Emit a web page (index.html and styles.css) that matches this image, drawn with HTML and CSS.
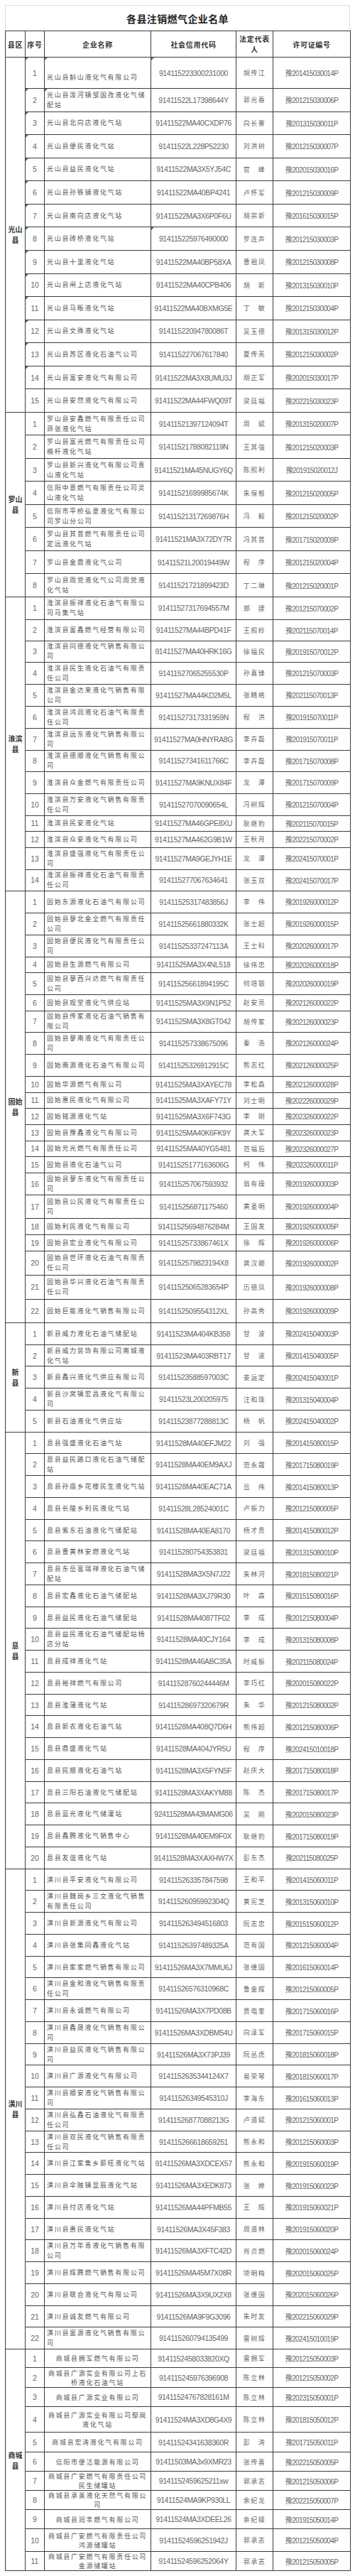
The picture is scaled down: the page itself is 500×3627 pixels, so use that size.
FILE: index.html
```html
<!DOCTYPE html>
<html lang="zh">
<head>
<meta charset="utf-8">
<title>各县注销燃气企业名单</title>
<link rel="stylesheet" href="styles.css">
</head>
<body>
<div class="sheet">
  <div class="title">各县注销燃气企业名单</div>
  <table class="list">
    <colgroup>
      <col class="c-county"><col class="c-seq"><col class="c-name"><col class="c-code"><col class="c-rep"><col class="c-lic">
    </colgroup>
    <thead>
      <tr class="head">
        <th>县区</th><th>序号</th><th>企业名称</th><th>社会信用代码</th><th>法定代表人</th><th>许可证编号</th>
      </tr>
    </thead>
    <tbody>
      <!-- 光山县 -->
      <tr class="h44"><td class="county" rowspan="15">光山<br>县</td><td class="seq g">1</td><td class="name g low">光山县斛山液化气有限公司</td><td class="code g">914115223300231000</td><td class="rep">胡传江</td><td class="lic">豫201415030014P</td></tr>
      <tr class="h326"><td class="seq g">2</td><td class="name g">光山县泼河镇邹国孜液化气储配站</td><td class="code">91411522L17398644Y</td><td class="rep">郭光春</td><td class="lic">豫201215030006P</td></tr>
      <tr class="h326"><td class="seq g">3</td><td class="name">光山县北向店液化气站</td><td class="code">91411522MA40CXDP76</td><td class="rep">向长寨</td><td class="lic">豫201315030011P</td></tr>
      <tr class="h326"><td class="seq g">4</td><td class="name">光山县便民液化气站</td><td class="code">91411522L228P52230</td><td class="rep">刘洪树</td><td class="lic">豫201215030007P</td></tr>
      <tr class="h326"><td class="seq g">5</td><td class="name">光山县益民液化气站</td><td class="code">91411522MA3X5YJ54C</td><td class="rep">官　峰</td><td class="lic">豫202015030016P</td></tr>
      <tr class="h326"><td class="seq g">6</td><td class="name">光山县孙铁铺液化气站</td><td class="code">91411522MA40BP4241</td><td class="rep">卢怀军</td><td class="lic">豫201215030009P</td></tr>
      <tr class="h326"><td class="seq g">7</td><td class="name">光山县南向店液化气站</td><td class="code">91411522MA3X6P0F6U</td><td class="rep">胡宗新</td><td class="lic">豫201615030015P</td></tr>
      <tr class="h326"><td class="seq g">8</td><td class="name">光山县砖桥液化气站</td><td class="code g">914115225976490000</td><td class="rep">罗连声</td><td class="lic">豫201215030003P</td></tr>
      <tr class="h326"><td class="seq g">9</td><td class="name">光山县十里液化气站</td><td class="code">91411522MA40BP58XA</td><td class="rep">曹祖凤</td><td class="lic">豫201215030008P</td></tr>
      <tr class="h326"><td class="seq g">10</td><td class="name">光山县闸上店液化气站</td><td class="code">91411522MA40CPB406</td><td class="rep">胡　新</td><td class="lic">豫201315030010P</td></tr>
      <tr class="h326"><td class="seq g">11</td><td class="name">光山县马畈液化气站</td><td class="code">91411522MA40BXMG5E</td><td class="rep">丁　敏</td><td class="lic">豫201215030004P</td></tr>
      <tr class="h326"><td class="seq g">12</td><td class="name">光山县文殊液化气站</td><td class="code">91411522094780086T</td><td class="rep">吴玉德</td><td class="lic">豫201315030012P</td></tr>
      <tr class="h326"><td class="seq g">13</td><td class="name">光山县苏区液化石油气公司</td><td class="code">914115227067617840</td><td class="rep">夏传英</td><td class="lic">豫201215030002P</td></tr>
      <tr class="h326"><td class="seq g">14</td><td class="name">光山县富安液化气有限公司</td><td class="code">91411522MA3X8UMU3J</td><td class="rep">胡正军</td><td class="lic">豫202015030017P</td></tr>
      <tr class="h326"><td class="seq">15</td><td class="name">光山县安然液化气有限公司</td><td class="code">91411522MA44FWQ09T</td><td class="rep">梁廷福</td><td class="lic">豫202215030023P</td></tr>

      <!-- 罗山县 -->
      <tr class="h325"><td class="county" rowspan="8">罗山<br>县</td><td class="seq">1</td><td class="name">罗山县安鑫燃气有限责任公司莽张液化气站</td><td class="code">91411521397124094T</td><td class="rep">周　斌</td><td class="lic">豫201315020007P</td></tr>
      <tr class="h325"><td class="seq">2</td><td class="name">罗山县富光燃气有限责任公司楠杆液化气站</td><td class="code">91411521788082119N</td><td class="rep">王其强</td><td class="lic">豫201215020003P</td></tr>
      <tr class="h325"><td class="seq">3</td><td class="name">罗山县新兴液化气有限公司青山液化气站</td><td class="code">91411521MA45NUGY6Q</td><td class="rep">陈照利</td><td class="lic">豫201915020012J</td></tr>
      <tr class="h325"><td class="seq">4</td><td class="name">信阳中意燃气有限责任公司灵山液化气站</td><td class="code">91411521699985674K</td><td class="rep">朱保根</td><td class="lic">豫201215020005P</td></tr>
      <tr class="h325"><td class="seq">5</td><td class="name">信阳市平桥弘意液化气有限公司罗山分公司</td><td class="code">91411521317269876H</td><td class="rep">冯　毅</td><td class="lic">豫201215020002P</td></tr>
      <tr class="h325"><td class="seq">6</td><td class="name">罗山县其普燃气有限责任公司定远液化气站</td><td class="code">91411521MA3X72DY7R</td><td class="rep">冯其普</td><td class="lic">豫201715020009P</td></tr>
      <tr class="h325"><td class="seq">7</td><td class="name">罗山县金鼎液化气公司</td><td class="code">91411521L20019449W</td><td class="rep">程　序</td><td class="lic">豫201215020004P</td></tr>
      <tr class="h325"><td class="seq">8</td><td class="name">罗山县周党液化气公司周党液化气站</td><td class="code">91411521721899423D</td><td class="rep">丁二琳</td><td class="lic">豫201215020001P</td></tr>

      <!-- 淮滨县 -->
      <tr class="h32"><td class="county" rowspan="14">淮滨<br>县</td><td class="seq">1</td><td class="name">淮滨县振祥液化石油气有限公司马集气站</td><td class="code">91411527317694557M</td><td class="rep">郑　建</td><td class="lic">豫201215070002P</td></tr>
      <tr class="h30"><td class="seq">2</td><td class="name">淮滨县富鑫燃气经营有限公司</td><td class="code">91411527MA44BPD41F</td><td class="rep">王照岭</td><td class="lic">豫202115070014P</td></tr>
      <tr class="h30"><td class="seq">3</td><td class="name">淮滨县同德液化气销售有限公司</td><td class="code">91411527MA40HRK16G</td><td class="rep">徐福民</td><td class="lic">豫201915070012P</td></tr>
      <tr class="h31"><td class="seq">4</td><td class="name">淮滨县民生液化石油气有限责任公司</td><td class="code">91411527065255530P</td><td class="rep">孙喜锋</td><td class="lic">豫201215070003P</td></tr>
      <tr class="h31"><td class="seq">5</td><td class="name">淮滨县金达来液化气销售有限公司</td><td class="code">91411527MA44KD2M5L</td><td class="rep">张精格</td><td class="lic">豫202115070013P</td></tr>
      <tr class="h31"><td class="seq">6</td><td class="name">淮滨县鸿润液化石油气有限责任公司</td><td class="code">91411527317331959N</td><td class="rep">程　洪</td><td class="lic">豫201915070011P</td></tr>
      <tr class="h31"><td class="seq">7</td><td class="name">淮滨县远东液化气销售有限公司</td><td class="code">91411527MA0HNYRA8G</td><td class="rep">李卉磊</td><td class="lic">豫201915070011P</td></tr>
      <tr class="h30"><td class="seq">8</td><td class="name">淮滨县德顺液化气销售有限公司</td><td class="code">91411527341611766C</td><td class="rep">李卉磊</td><td class="lic">豫201715070008P</td></tr>
      <tr class="h31"><td class="seq">9</td><td class="name">淮滨县众金燃气有限责任公司</td><td class="code">91411527MA9KNUX84F</td><td class="rep">龙　潭</td><td class="lic">豫201715070009P</td></tr>
      <tr class="h31"><td class="seq">10</td><td class="name">淮滨县万安液化气销售有限责任公司</td><td class="code">91411527070090654L</td><td class="rep">冯树辉</td><td class="lic">豫201215070004P</td></tr>
      <tr class="h22"><td class="seq">11</td><td class="name">淮滨县民安液化气站</td><td class="code">91411527MA46GPE8XU</td><td class="rep">耿继豹</td><td class="lic">豫202115070015P</td></tr>
      <tr class="h23"><td class="seq">12</td><td class="name">淮滨县众安液化气有限公司</td><td class="code">91411527MA462G9B1W</td><td class="rep">王秋月</td><td class="lic">豫202215070002P</td></tr>
      <tr class="h31"><td class="seq">13</td><td class="name">淮滨县盛强液化气有限责任公司</td><td class="code">91411527MA9GEJYH1E</td><td class="rep">龙　潭</td><td class="lic">豫202415070001P</td></tr>
      <tr class="h30"><td class="seq">14</td><td class="name">淮滨县振祥液化石油气有限责任公司</td><td class="code">914115277067634641</td><td class="rep">张玉双</td><td class="lic">豫202415070017P</td></tr>

      <!-- 固始县 -->
      <tr class="h31"><td class="county" rowspan="22">固始<br>县</td><td class="seq">1</td><td class="name">固始东源液化石油气有限公司</td><td class="code">91411525317483856J</td><td class="rep">李　伟</td><td class="lic">豫201926000012P</td></tr>
      <tr class="h31"><td class="seq">2</td><td class="name">固始县蓼北金全燃气有限责任公司</td><td class="code">91411525661880332K</td><td class="rep">张士超</td><td class="lic">豫201926000015P</td></tr>
      <tr class="h31"><td class="seq">3</td><td class="name">固始县便民液化气有限责任公司</td><td class="code">91411525337247113A</td><td class="rep">王士科</td><td class="lic">豫202026000017P</td></tr>
      <tr class="h22"><td class="seq">4</td><td class="name">固始县生源燃气有限公司</td><td class="code">91411525MA3X4NL518</td><td class="rep">徐伟忠</td><td class="lic">豫202026000018P</td></tr>
      <tr class="h31"><td class="seq">5</td><td class="name">固始县蓼西兴达燃气有限责任公司</td><td class="code">91411525661894195C</td><td class="rep">何培银</td><td class="lic">豫202026000019P</td></tr>
      <tr class="h23"><td class="seq">6</td><td class="name">固始县观堂液化气供应站</td><td class="code">91411525MA3X9N1P52</td><td class="rep">赵安亮</td><td class="lic">豫202126000022P</td></tr>
      <tr class="h30"><td class="seq">7</td><td class="name">固始县传家液化石油气销售有限公司</td><td class="code">91411525MA3X8GT042</td><td class="rep">胡传家</td><td class="lic">豫202126000023P</td></tr>
      <tr class="h31"><td class="seq">8</td><td class="name">固始县蓼南液化气有限责任公司</td><td class="code">914115257338675096</td><td class="rep">秦　浩</td><td class="lic">豫202126000024P</td></tr>
      <tr class="h31"><td class="seq">9</td><td class="name">固始南源液化石油气有限公司</td><td class="code">91411525326912915C</td><td class="rep">熊志红</td><td class="lic">豫202126000025P</td></tr>
      <tr class="h23"><td class="seq">10</td><td class="name">固始华源燃气有限公司</td><td class="code">91411525MA3XAYEC78</td><td class="rep">李松森</td><td class="lic">豫202126000028P</td></tr>
      <tr class="h22"><td class="seq">11</td><td class="name">固始惠民液化气有限公司</td><td class="code">91411525MA3XAFY71Y</td><td class="rep">刘士明</td><td class="lic">豫202226000029P</td></tr>
      <tr class="h23"><td class="seq">12</td><td class="name">固始铭源液化气站</td><td class="code">91411525MA3X6F743G</td><td class="rep">李　刚</td><td class="lic">豫202326000022P</td></tr>
      <tr class="h23"><td class="seq">13</td><td class="name">固始县豫鑫液化气有限公司</td><td class="code">91411525MA40K6FK9Y</td><td class="rep">龚大军</td><td class="lic">豫202326000023P</td></tr>
      <tr class="h22"><td class="seq">14</td><td class="name">固始元光燃气有限责任公司</td><td class="code">91411525MA40YG5481</td><td class="rep">范福后</td><td class="lic">豫202326000027P</td></tr>
      <tr class="h23"><td class="seq">15</td><td class="name">固始县液化石油气公司</td><td class="code">91411525177163606G</td><td class="rep">柯　伟</td><td class="lic">豫202326000011P</td></tr>
      <tr class="h31"><td class="seq">16</td><td class="name">固始县蓼东液化气有限责任公司</td><td class="code">914115257067593932</td><td class="rep">翁有操</td><td class="lic">豫201926000003P</td></tr>
      <tr class="h33"><td class="seq">17</td><td class="name">固始县公民液化气有限责任公司</td><td class="code">914115256871175460</td><td class="rep">黄圣明</td><td class="lic">豫201926000004P</td></tr>
      <tr class="h23"><td class="seq">18</td><td class="name">固始利民液化气有限公司</td><td class="code">91411525694876284M</td><td class="rep">王国发</td><td class="lic">豫201926000005P</td></tr>
      <tr class="h23"><td class="seq">19</td><td class="name">固始县宏业液化气有限公司</td><td class="code">91411525733867461X</td><td class="rep">徐　辉</td><td class="lic">豫201926000006P</td></tr>
      <tr class="h34"><td class="seq">20</td><td class="name">固始县世环液化石油气有限责任公司</td><td class="code">9141152579823194X8</td><td class="rep">龚汉卿</td><td class="lic">豫201926000002P</td></tr>
      <tr class="h34"><td class="seq">21</td><td class="name">固始县华兴液化石油气有限责任公司</td><td class="code">91411525065283654P</td><td class="rep">历德凤</td><td class="lic">豫201926000008P</td></tr>
      <tr class="h33"><td class="seq">22</td><td class="name">固始巨能液化气销售有限公司</td><td class="code">9141152509554312XL</td><td class="rep">孙高秀</td><td class="lic">豫201926000009P</td></tr>

      <!-- 新县 -->
      <tr class="h308"><td class="county" rowspan="5">新<br>县</td><td class="seq">1</td><td class="name">新县威力液化石油气储配站</td><td class="code">91411523MA404KB358</td><td class="rep">甘　波</td><td class="lic">豫202415040003P</td></tr>
      <tr class="h308"><td class="seq">2</td><td class="name">新县威力装饰有限公司南城液化气站</td><td class="code">91411523MA403RBT17</td><td class="rep">甘　波</td><td class="lic">豫201415040005P</td></tr>
      <tr class="h308"><td class="seq">3</td><td class="name">新县鑫兴液化气供应有限公司</td><td class="code">91411523588597003C</td><td class="rep">姜运定</td><td class="lic">豫202415040001P</td></tr>
      <tr class="h308"><td class="seq">4</td><td class="name">新县沙窝镇宏昌液化气有限公司</td><td class="code">91411523L200205975</td><td class="rep">汪和珠</td><td class="lic">豫201315040004P</td></tr>
      <tr class="h308"><td class="seq">5</td><td class="name">新县石油液化气供应站</td><td class="code">91411523877288813C</td><td class="rep">杨　帆</td><td class="lic">豫202415040002P</td></tr>

      <!-- 息县 -->
      <tr class="h308"><td class="county" rowspan="20">息<br>县</td><td class="seq">1</td><td class="name">息县强盛液化石油气站</td><td class="code">91411528MA40EFJM22</td><td class="rep">刘　强</td><td class="lic">豫201415080015P</td></tr>
      <tr class="h308"><td class="seq">2</td><td class="name">息县益民路口液化石油气储配站</td><td class="code">91411528MA40EM9AXJ</td><td class="rep">范永霞</td><td class="lic">豫201715080019P</td></tr>
      <tr class="h308"><td class="seq">3</td><td class="name">息县孙庙乡花楼民生液化气站</td><td class="code">91411528MA40EAC71A</td><td class="rep">岳　伟</td><td class="lic">豫201415080013P</td></tr>
      <tr class="h308"><td class="seq">4</td><td class="name">息县长陵乡利民液化气站</td><td class="code">91411528L28524001C</td><td class="rep">卢振力</td><td class="lic">豫201215080005P</td></tr>
      <tr class="h308"><td class="seq">5</td><td class="name">息县紫东石油液化气储配站</td><td class="code">91411528MA40EA8170</td><td class="rep">杨才贵</td><td class="lic">豫201415080012P</td></tr>
      <tr class="h308"><td class="seq">6</td><td class="name">息县曹黄林安燃液化气站</td><td class="code">914115280754353831</td><td class="rep">梁廷福</td><td class="lic">豫201315080010P</td></tr>
      <tr class="h308"><td class="seq">7</td><td class="name">息县东岳富瑞祥液化石油气储配站</td><td class="code">91411528MA3X5N7J22</td><td class="rep">朱林河</td><td class="lic">豫201815080021P</td></tr>
      <tr class="h308"><td class="seq">8</td><td class="name">息县宏鑫液化石油气储配站</td><td class="code">91411528MA3XJ79R30</td><td class="rep">叶　森</td><td class="lic">豫201515080016P</td></tr>
      <tr class="h308"><td class="seq">9</td><td class="name">息县益民液化石油气储配站</td><td class="code">91411528MA4087TF02</td><td class="rep">李　成</td><td class="lic">豫201215080004P</td></tr>
      <tr class="h308"><td class="seq">10</td><td class="name">息县益民液化石油气储配站杨店分站</td><td class="code">91411528MA40CJY164</td><td class="rep">李　成</td><td class="lic">豫201315080008P</td></tr>
      <tr class="h308"><td class="seq">11</td><td class="name">息县成祥液化气站</td><td class="code">91411528MA46ABC35A</td><td class="rep">时威振</td><td class="lic">豫202115080024P</td></tr>
      <tr class="h308"><td class="seq">12</td><td class="name">息县裕祥燃气有限公司</td><td class="code">91411528760244446M</td><td class="rep">李巧红</td><td class="lic">豫202015080022P</td></tr>
      <tr class="h308"><td class="seq">13</td><td class="name">息县淮蒲液化气站</td><td class="code">91411528697320679R</td><td class="rep">朱　华</td><td class="lic">豫201215080002P</td></tr>
      <tr class="h308"><td class="seq">14</td><td class="name">息县新农液化石油气站</td><td class="code">91411528MA408Q7D6H</td><td class="rep">熊伟超</td><td class="lic">豫201215080006P</td></tr>
      <tr class="h308"><td class="seq">15</td><td class="name">息县鼎盛液化气站</td><td class="code">91411528MA404JYR5U</td><td class="rep">程　序</td><td class="lic">豫202415010018P</td></tr>
      <tr class="h308"><td class="seq">16</td><td class="name">息县民顺液化石油气站</td><td class="code">91411528MA3X5FYN5F</td><td class="rep">赵庆大</td><td class="lic">豫201715080018P</td></tr>
      <tr class="h308"><td class="seq">17</td><td class="name">息县三阳石油液化气储配站</td><td class="code">91411528MA3XAKYM88</td><td class="rep">陈　杰</td><td class="lic">豫201715080017P</td></tr>
      <tr class="h308"><td class="seq">18</td><td class="name">息县蓝光液化气储灌站</td><td class="code">92411528MA43MAMG06</td><td class="rep">吴　刚</td><td class="lic">豫202015080023P</td></tr>
      <tr class="h308"><td class="seq">19</td><td class="name">息县鑫腾液化气销售中心</td><td class="code">91411528MA40EM9F0X</td><td class="rep">耿继豹</td><td class="lic">豫201715080019P</td></tr>
      <tr class="h308"><td class="seq">20</td><td class="name">息县友谊液化气站</td><td class="code">91411528MA3XAXHW7X</td><td class="rep">彭东杰</td><td class="lic">豫202115080025P</td></tr>

      <!-- 潢川县 -->
      <tr class="h308"><td class="county" rowspan="22">潢川<br>县</td><td class="seq">1</td><td class="name">潢川县平安液化气有限公司</td><td class="code">914115263357847598</td><td class="rep">王和平</td><td class="lic">豫201415060011P</td></tr>
      <tr class="h308"><td class="seq">2</td><td class="name">潢川县魏岗乡三文液化气销售有限责任公司</td><td class="code">91411526095992304Q</td><td class="rep">黄宪芝</td><td class="lic">豫201315060010P</td></tr>
      <tr class="h308"><td class="seq">3</td><td class="name">潢川县新源液化气有限公司</td><td class="code">914115263494516803</td><td class="rep">阮志忠</td><td class="lic">豫201515060012P</td></tr>
      <tr class="h308"><td class="seq">4</td><td class="name">潢川县张集同鑫液化气站</td><td class="code">91411526397489325A</td><td class="rep">范有国</td><td class="lic">豫201215060004P</td></tr>
      <tr class="h308"><td class="seq">5</td><td class="name">潢川县家家燃气销售有限公司</td><td class="code">91411526MA3X7MMU6J</td><td class="rep">张维国</td><td class="lic">豫201615060014P</td></tr>
      <tr class="h308"><td class="seq">6</td><td class="name">潢川县金和液化气销售有限责任公司</td><td class="code">91411526576310968C</td><td class="rep">鲁金辉</td><td class="lic">豫201215060005P</td></tr>
      <tr class="h308"><td class="seq">7</td><td class="name">潢川县永诚燃气有限公司</td><td class="code">91411526MA3X7PD08B</td><td class="rep">贾电奎</td><td class="lic">豫201715060016P</td></tr>
      <tr class="h308"><td class="seq">8</td><td class="name">潢川县鑫晟液化气销售有限公司</td><td class="code">91411526MA3XDBM54U</td><td class="rep">向泽军</td><td class="lic">豫201715060015P</td></tr>
      <tr class="h308"><td class="seq">9</td><td class="name">潢川县益民液化气销售有限公司</td><td class="code">91411526MA3X73PJ39</td><td class="rep">阮丛虎</td><td class="lic">豫201815060018P</td></tr>
      <tr class="h308"><td class="seq">10</td><td class="name">潢川县广源液化气有限公司</td><td class="code">9141152635344124X7</td><td class="rep">易荣琴</td><td class="lic">豫201815060017P</td></tr>
      <tr class="h308"><td class="seq">11</td><td class="name">潢川县顺安液化气销售有限公司</td><td class="code">91411526349545310J</td><td class="rep">李海东</td><td class="lic">豫201615060013P</td></tr>
      <tr class="h308"><td class="seq">12</td><td class="name">潢川县弘鑫石油液化气有限责任公司</td><td class="code">91411526877088213G</td><td class="rep">卢道斌</td><td class="lic">豫201215060001P</td></tr>
      <tr class="h308"><td class="seq">13</td><td class="name">潢川县双民液化气销售有限责任公司</td><td class="code">914115266618659251</td><td class="rep">熊永和</td><td class="lic">豫201215060003P</td></tr>
      <tr class="h308"><td class="seq">14</td><td class="name">潢川县江家集乡薪旺液化气站</td><td class="code">91411526MA3XDCEX57</td><td class="rep">熊永和</td><td class="lic">豫201915060019P</td></tr>
      <tr class="h308"><td class="seq">15</td><td class="name">潢川县伞陂镇显辰液化气站</td><td class="code">91411526MA3XEDK873</td><td class="rep">张　婷</td><td class="lic">豫201915060023P</td></tr>
      <tr class="h308"><td class="seq">16</td><td class="name">潢川县付店液化气站</td><td class="code">91411526MA44PFMB55</td><td class="rep">王　辉</td><td class="lic">豫201915060021P</td></tr>
      <tr class="h308"><td class="seq">17</td><td class="name">潢川县惠民液化气站</td><td class="code">91411526MA3X45F383</td><td class="rep">周道林</td><td class="lic">豫201915060020P</td></tr>
      <tr class="h308"><td class="seq">18</td><td class="name">潢川县万年青液化气销售有限公司</td><td class="code">91411526MA3XFTC42D</td><td class="rep">肖贞燃</td><td class="lic">豫202015060024P</td></tr>
      <tr class="h308"><td class="seq">19</td><td class="name">潢川县辉腾燃气销售有限公司</td><td class="code">91411526MA45M7X08R</td><td class="rep">项明梅</td><td class="lic">豫202015060025P</td></tr>
      <tr class="h308"><td class="seq">20</td><td class="name">潢川县联合液化气有限公司</td><td class="code">91411526MA3X9UX2X8</td><td class="rep">张维国</td><td class="lic">豫202015060026P</td></tr>
      <tr class="h308"><td class="seq">21</td><td class="name">潢川县诚友燃气有限公司</td><td class="code">91411526MA9F9G3096</td><td class="rep">朱时友</td><td class="lic">豫202215060029P</td></tr>
      <tr class="h308"><td class="seq">22</td><td class="name">潢川县富源液化气销售有限公司</td><td class="code">914115260794135499</td><td class="rep">雷树辉</td><td class="lic">豫202415010019P</td></tr>

      <!-- 商城县 -->
      <tr class="h26 sc"><td class="county" rowspan="11">商城<br>县</td><td class="seq">1</td><td class="name">商城县拥军燃气有限公司</td><td class="code">9141152458033820XQ</td><td class="rep">雷拥军</td><td class="lic">豫201215050003P</td></tr>
      <tr class="h28 sc"><td class="seq">2</td><td class="name">商城县广源实业有限公司上石桥液化石油气站</td><td class="code">914115245976396908</td><td class="rep">陈立林</td><td class="lic">豫201215050002P</td></tr>
      <tr class="h27 sc"><td class="seq">3</td><td class="name">商城县广源实业有限公司</td><td class="code">91411524767828161M</td><td class="rep">陈立林</td><td class="lic">豫202315050001P</td></tr>
      <tr class="h36 sc"><td class="seq">4</td><td class="name">商城县广源实业有限公司鄢岗液化气站</td><td class="code">91411524MA3XD8G4X9</td><td class="rep">陈立林</td><td class="lic">豫201815050012P</td></tr>
      <tr class="h28 sc"><td class="seq">5</td><td class="name">商城县宏涛液化气有限公司</td><td class="code">91411524341638360R</td><td class="rep">彭　涛</td><td class="lic">豫201715050011P</td></tr>
      <tr class="h27 sc"><td class="seq">6</td><td class="name">信阳市便洁能源有限公司</td><td class="code">91411503MA3x9XMR23</td><td class="rep">张传喜</td><td class="lic">豫202215050005P</td></tr>
      <tr class="h27 sc"><td class="seq">7</td><td class="name">商城县广安燃气有限责任公司民生储罐站</td><td class="code">9141152459625211xw</td><td class="rep">郭承志</td><td class="lic">豫201215050006P</td></tr>
      <tr class="h27 sc"><td class="seq">8</td><td class="name">商城县承美液化天然气有限公司</td><td class="code">91411524MA9KP930LL</td><td class="rep">余纪龙</td><td class="lic">豫202215050007P</td></tr>
      <tr class="h27 sc"><td class="seq">9</td><td class="name">商城县润丰燃气有限公司</td><td class="code">91411524MA3XDEEL26</td><td class="rep">余纪铎</td><td class="lic">豫201915050014P</td></tr>
      <tr class="h32 sc"><td class="seq">10</td><td class="name">商城县广安燃气有限责任公司鸿源储罐站</td><td class="code">91411524596251942J</td><td class="rep">郭承志</td><td class="lic">豫201215050004P</td></tr>
      <tr class="h27 sc"><td class="seq">11</td><td class="name">商城县广安燃气有限责任公司金源储罐站</td><td class="code">91411524596252064Y</td><td class="rep">郭承志</td><td class="lic">豫201215050005P</td></tr>
    </tbody>
  </table>
</div>
</body>
</html>
```

FILE: styles.css
```css
html, body {
  margin: 0;
  padding: 0;
  background: #ffffff;
}

body {
  padding: 7px 7px 8px 7px;
  font-family: "Liberation Sans", "Noto Sans CJK SC", sans-serif;
}

.sheet {
  width: 486px;
}

.title {
  box-sizing: border-box;
  height: 36px;
  border: 1px solid #dcdcdc;
  border-bottom: none;
  display: flex;
  align-items: center;
  justify-content: center;
  font-family: "Noto Sans CJK SC", sans-serif;
  font-weight: 700;
  font-size: 14px;
  letter-spacing: 0.4px;
  color: #222;
}

.list {
  width: 486px;
  border-collapse: collapse;
  table-layout: fixed;
}

.c-county { width: 28px; }
.c-seq { width: 27px; }
.c-name { width: 150px; }
.c-code { width: 120px; }
.c-rep { width: 52px; }
.c-lic { width: 109px; }

.list th,
.list td {
  border: 1px solid #3c3c3c;
  padding: 0;
  vertical-align: middle;
  overflow: hidden;
}

.head { height: 37px; }

.list th {
  font-family: "Noto Sans CJK SC", sans-serif;
  font-weight: 700;
  font-size: 10px;
  letter-spacing: 0.7px;
  line-height: 15px;
  color: #333;
  text-align: center;
  padding: 0 1px;
}

.county {
  font-family: "Noto Sans CJK SC", sans-serif;
  font-weight: 700;
  font-size: 10px;
  line-height: 15px;
  color: #333;
  text-align: center;
}

.seq {
  text-align: center;
  font-family: "Liberation Sans", sans-serif;
  font-size: 10.5px;
  color: #666;
}

.name {
  text-align: left;
  padding: 0 3px !important;
  font-family: "Noto Sans CJK SC", sans-serif;
  font-size: 9px;
  letter-spacing: 1.7px;
  line-height: 14px;
  color: #555;
}

.name.low {
  vertical-align: bottom;
  padding-bottom: 8px !important;
}

.sc .name {
  text-align: center;
  line-height: 13px;
}

.code {
  text-align: center;
  font-family: "Liberation Sans", sans-serif;
  font-size: 10.5px;
  letter-spacing: -0.4px;
  color: #666;
}

.rep {
  text-align: center;
  font-family: "Noto Sans CJK SC", sans-serif;
  font-size: 9px;
  letter-spacing: 1.5px;
  color: #666;
}

.lic {
  text-align: center;
  font-family: "Liberation Sans", "Noto Sans CJK SC", sans-serif;
  font-size: 10px;
  letter-spacing: -0.65px;
  color: #666;
}

.g { position: relative; }
.g::before {
  content: "";
  position: absolute;
  left: 0;
  top: 0;
  border-style: solid;
  border-width: 4px 4px 0 0;
  border-color: #2f8f2f transparent transparent transparent;
}

.h22 { height: 22px; }
.h23 { height: 23px; }
.h26 { height: 26px; }
.h27 { height: 27px; }
.h28 { height: 28px; }
.h30 { height: 30px; }
.h31 { height: 31px; }
.h32 { height: 32px; }
.h33 { height: 33px; }
.h34 { height: 34px; }
.h36 { height: 36px; }
.h44 { height: 44px; }
.h308 { height: 30.75px; }
.h325 { height: 32.5px; }
.h326 { height: 32.57px; }
```
